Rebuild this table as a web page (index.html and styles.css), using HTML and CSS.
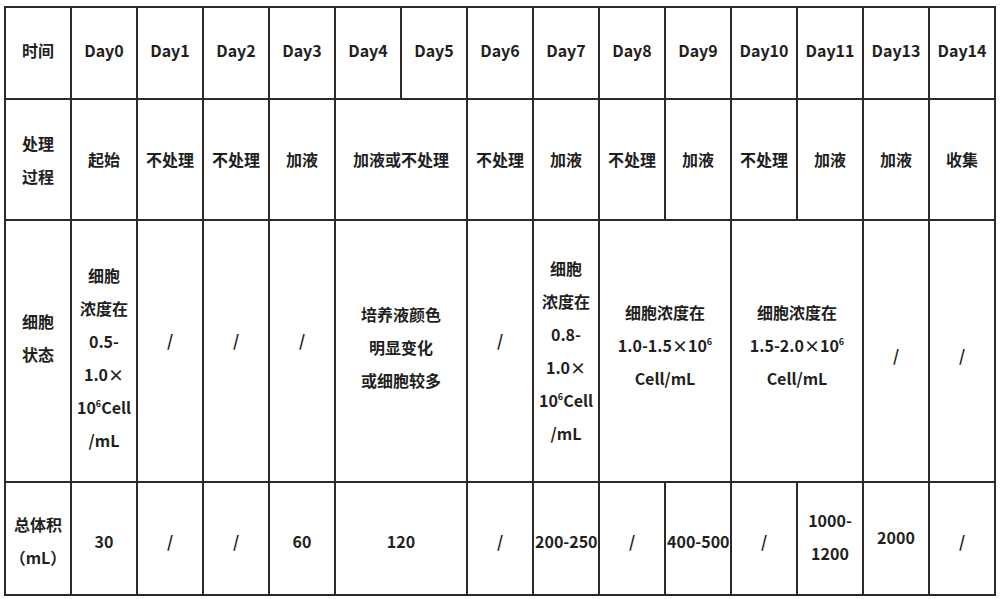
FILE: index.html
```html
<!DOCTYPE html>
<html lang="zh-CN">
<head>
<meta charset="utf-8">
<title>细胞培养流程</title>
<link rel="stylesheet" href="styles.css">
</head>
<body>
<table class="grid">
  <colgroup>
    <col><col><col><col><col><col><col><col><col><col><col><col><col><col><col>
  </colgroup>
  <tr class="r-head">
    <td>时间</td>
    <td>Day0</td>
    <td>Day1</td>
    <td>Day2</td>
    <td>Day3</td>
    <td>Day4</td>
    <td>Day5</td>
    <td>Day6</td>
    <td>Day7</td>
    <td>Day8</td>
    <td>Day9</td>
    <td>Day10</td>
    <td>Day11</td>
    <td>Day13</td>
    <td>Day14</td>
  </tr>
  <tr class="r-proc">
    <td>处理<br>过程</td>
    <td>起始</td>
    <td>不处理</td>
    <td>不处理</td>
    <td>加液</td>
    <td colspan="2">加液或不处理</td>
    <td>不处理</td>
    <td>加液</td>
    <td>不处理</td>
    <td>加液</td>
    <td>不处理</td>
    <td>加液</td>
    <td>加液</td>
    <td>收集</td>
  </tr>
  <tr class="r-state">
    <td class="up-l">细胞<br>状态</td>
    <td class="down">细胞<br>浓度在<br>0.5-<br>1.0×<br>10<sup>6</sup>Cell<br>/mL</td>
    <td class="up">/</td>
    <td class="up">/</td>
    <td class="up">/</td>
    <td colspan="2" class="up-m">培养液颜色<br>明显变化<br>或细胞较多</td>
    <td class="up">/</td>
    <td>细胞<br>浓度在<br>0.8-<br>1.0×<br>10<sup>6</sup>Cell<br>/mL</td>
    <td colspan="2" class="up-s">细胞浓度在<br>1.0-1.5×10<sup>6</sup><br>Cell/mL</td>
    <td colspan="2" class="up-s">细胞浓度在<br>1.5-2.0×10<sup>6</sup><br>Cell/mL</td>
    <td class="down-s">/</td>
    <td class="down-s">/</td>
  </tr>
  <tr class="r-vol">
    <td>总体积<br>（mL）</td>
    <td>30</td>
    <td>/</td>
    <td>/</td>
    <td>60</td>
    <td colspan="2">120</td>
    <td>/</td>
    <td>200-250</td>
    <td>/</td>
    <td>400-500</td>
    <td>/</td>
    <td class="lift">1000-<br>1200</td>
    <td class="lift">2000</td>
    <td>/</td>
  </tr>
</table>
</body>
</html>
```

FILE: styles.css
```css
html, body {
  margin: 0;
  padding: 0;
  background: #ffffff;
}

body {
  padding: 6px 0 0 4px;
  font-family: "Noto Sans CJK SC", "Noto Sans", sans-serif;
  color: #231f1e;
}

.grid {
  border-collapse: collapse;
  table-layout: fixed;
  width: 990px;
}

.grid col {
  width: 66px;
}

.grid td {
  border: 2px solid #2d2928;
  padding: 0 1px;
  text-align: center;
  vertical-align: middle;
  font-size: 16px;
  font-weight: 700;
  line-height: 33px;
  white-space: nowrap;
}

.grid sup {
  font-size: 9px;
  line-height: 0;
  vertical-align: 7px;
}

.r-head { height: 92px; }
.r-head td { padding-bottom: 5px; }
.r-proc { height: 121px; }
.r-state { height: 262px; }
.r-vol { height: 113px; }
.r-vol td { padding-top: 5px; }

.grid td.up { padding-bottom: 22px; }
.grid td.up-l { padding-bottom: 26px; }
.grid td.up-m { padding-bottom: 8px; }
.grid td.up-s { padding-bottom: 12px; }
.grid td.down { padding-top: 14px; }
.grid td.down-s { padding-top: 8px; }
.r-vol td.lift { padding-top: 0; padding-bottom: 3px; }
```
